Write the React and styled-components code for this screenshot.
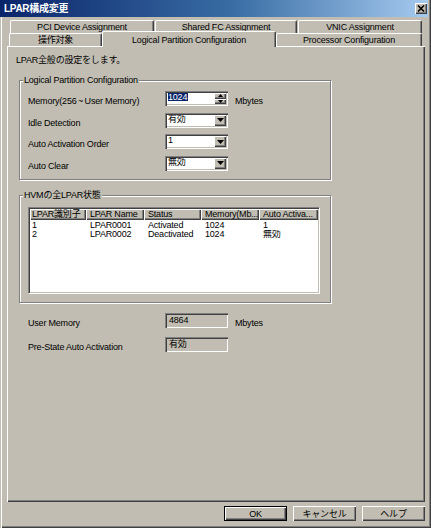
import React from 'react';
import styled, { createGlobalStyle, css } from 'styled-components';

const BG = '#c1bdb2';
const FONT = `"Liberation Sans", Arial, "Noto Sans CJK JP", sans-serif`;

const Global = createGlobalStyle`
  html, body { margin: 0; padding: 0; background: ${BG}; }
  body { font-family: ${FONT}; font-size: 9px; color: #000; }
  * { box-sizing: border-box; }
`;

const raised = css`
  box-shadow: inset 1px 1px 0 #fff, inset -1px -1px 0 #404040, inset -2px -2px 0 #808080;
`;

const sunken = css`
  box-shadow: inset 1px 1px 0 #808080, inset 2px 2px 0 #404040, inset -1px -1px 0 #fff, inset -2px -2px 0 ${BG};
`;

const Window = styled.div`
  width: 431px;
  height: 528px;
  display: flex;
  flex-direction: column;
  background: ${BG};
  box-shadow: inset -1px -1px 0 #404040, inset -2px -2px 0 #808080;
  letter-spacing: -0.2px;
`;

const TitleBar = styled.div`
  height: 17px;
  margin-right: 3px;
  display: flex;
  align-items: center;
  justify-content: space-between;
  padding: 0 1px 0 4px;
  background: linear-gradient(to right, #0a246a 0%, #3a6ea5 55%, #a6caf0 100%);
`;

const Title = styled.span`
  color: #fff;
  font-weight: bold;
  font-size: 10px;
  line-height: 12px;
  letter-spacing: -0.3px;
`;

const CloseBtn = styled.div`
  width: 12px;
  height: 11px;
  background: ${BG};
  ${raised};
  display: flex;
  align-items: center;
  justify-content: center;
`;

const Body = styled.div`
  flex: 1;
  display: flex;
  flex-direction: column;
  padding: 3px 6px 7px 6px;
  border-left: 1px solid ${BG};
  box-shadow: inset 1px 0 0 #fff;
`;

const TabStrip = styled.div`
  display: flex;
  flex-direction: column;
`;

const TabRow = styled.div`
  display: flex;
  gap: ${p => p.$gap}px;
  padding-left: ${p => p.$pl}px;
  height: 13px;
`;

const Tab = styled.div`
  width: ${p => p.$w}px;
  height: 13px;
  display: flex;
  align-items: center;
  justify-content: center;
  background: ${BG};
  border-top: 1px solid #fff;
  border-left: 1px solid #fff;
  border-right: 1px solid #404040;
  box-shadow: inset -1px 0 0 #808080;
  border-radius: 2px 2px 0 0;
  line-height: 12px;
  white-space: nowrap;
  ${p => p.$active && css`
    position: relative;
    z-index: 1;
    height: 16px;
    margin-top: -2px;
    margin-bottom: -1px;
  `}
`;

const Panel = styled.div`
  flex: 1;
  display: flex;
  flex-direction: column;
  align-items: flex-start;
  padding-left: 9px;
  box-shadow: inset 1px 1px 0 #fff, inset -1px -1px 0 #404040, inset -2px -2px 0 #808080;
`;

const Intro = styled.div`
  margin-top: 8px;
  line-height: 12px;
`;

const Group = styled.div`
  position: relative;
  width: 312px;
  margin: ${p => p.$mt}px 0 0 3px;
  padding: ${p => p.$pt}px 9px 8px 8px;
  border: 1px solid #808080;
  box-shadow: inset 1px 1px 0 #fff, 1px 1px 0 #fff;
`;

const Legend = styled.span`
  position: absolute;
  top: -7px;
  left: 3px;
  padding: 0 1px;
  background: ${BG};
  line-height: 12px;
  white-space: nowrap;
`;

const FormGrid = styled.div`
  display: grid;
  grid-template-columns: 137px 63px auto;
  grid-auto-rows: 15px;
  row-gap: ${p => p.$gap}px;
  align-items: start;
  margin-left: ${p => p.$ml || 0}px;
`;

const Label = styled.span`
  line-height: 12px;
  padding-top: 4px;
  white-space: nowrap;
`;

const Tilde = styled.span`
  display: inline-block;
  margin: 0 1.5px;
  font-family: "Liberation Sans", Arial, sans-serif;
`;

const Unit = styled(Label)`
  margin-left: 7px;
`;

const FieldBox = styled.div`
  width: 63px;
  height: 15px;
  padding: 2px;
  display: flex;
  background: ${p => (p.$readonly ? BG : '#fff')};
  ${sunken};
`;

const FieldText = styled.div`
  flex: 1;
  padding-left: 1px;
  line-height: 9px;
  white-space: nowrap;
  overflow: hidden;
`;

const Selected = styled.span`
  display: inline-block;
  background: #0a246a;
  color: #fff;
  line-height: 8px;
  padding-right: 1px;
`;

const ReadText = styled.div`
  padding-left: 2px;
  line-height: 10px;
`;

const SpinCol = styled.div`
  width: 12px;
  display: flex;
  flex-direction: column;
`;

const SpinBtn = styled.div`
  flex: 1;
  background: ${BG};
  ${raised};
  display: flex;
  align-items: center;
  justify-content: center;
`;

const ArrowBtn = styled.div`
  width: 12px;
  background: ${BG};
  ${raised};
  display: flex;
  align-items: center;
  justify-content: center;
`;

const ListView = styled.div`
  width: 292px;
  height: 87px;
  padding: 1px;
  background: #fff;
  border: 1px solid;
  border-color: #808080 #fff #fff #808080;
  box-shadow: inset 1px 1px 0 #404040, inset -1px -1px 0 ${BG};
`;

const HeaderRow = styled.div`
  display: flex;
  height: 11px;
`;

const HeaderCell = styled.div`
  width: ${p => p.$w}px;
  height: 11px;
  background: ${BG};
  ${raised};
  padding-left: ${p => (p.$first ? 2 : 4)}px;
  line-height: 11px;
  white-space: nowrap;
  overflow: hidden;
`;

const Rows = styled.div`
  padding-top: 1px;
`;

const Row = styled.div`
  display: flex;
  height: 9px;
`;

const Cell = styled.div`
  width: ${p => p.$w}px;
  padding-left: ${p => (p.$first ? 2 : 4)}px;
  line-height: 9px;
  white-space: nowrap;
  overflow: hidden;
`;

const InfoGrid = styled(FormGrid)`
  margin-top: 10px;
`;

const ButtonRow = styled.div`
  display: flex;
  justify-content: flex-end;
  gap: 6px;
  margin-top: 4px;
`;

const Button = styled.div`
  width: 63px;
  height: 15px;
  display: flex;
  align-items: center;
  justify-content: center;
  line-height: 12px;
  background: ${BG};
  ${raised};
  ${p => p.$default && css`
    box-shadow: inset 0 0 0 1px #000, inset 2px 2px 0 #fff, inset -2px -2px 0 #404040, inset -3px -3px 0 #808080;
  `}
`;

const Down = () => (
  <svg width="7" height="4" viewBox="0 0 7 4"><path d="M0 0H7L3.5 4Z" fill="#000" /></svg>
);
const SmallUp = () => (
  <svg width="5" height="3" viewBox="0 0 5 3"><path d="M0 3H5L2.5 0Z" fill="#000" /></svg>
);
const SmallDown = () => (
  <svg width="5" height="3" viewBox="0 0 5 3"><path d="M0 0H5L2.5 3Z" fill="#000" /></svg>
);

const Select = ({ value }) => (
  <FieldBox>
    <FieldText>{value}</FieldText>
    <ArrowBtn><Down /></ArrowBtn>
  </FieldBox>
);

const cols = [
  { t: 'LPAR識別子', w: 56 },
  { t: 'LPAR Name', w: 58 },
  { t: 'Status', w: 57 },
  { t: 'Memory(Mb...', w: 58 },
  { t: 'Auto Activa...', w: 59 },
];

const rows = [
  ['1', 'LPAR0001', 'Activated', '1024', '1'],
  ['2', 'LPAR0002', 'Deactivated', '1024', '無効'],
];

export default function App() {
  return (
    <>
      <Global />
      <Window>
        <TitleBar>
          <Title>LPAR構成変更</Title>
          <CloseBtn>
            <svg width="8" height="7" viewBox="0 0 8 7">
              <path d="M1 0.5L7 6.5M7 0.5L1 6.5" stroke="#000" strokeWidth="1.6" />
            </svg>
          </CloseBtn>
        </TitleBar>
        <Body>
          <TabStrip>
            <TabRow $pl={3} $gap={1}>
              <Tab $w={144}>PCI Device Assignment</Tab>
              <Tab $w={142}>Shared FC Assignment</Tab>
              <Tab $w={124}>VNIC Assignment</Tab>
            </TabRow>
            <TabRow $pl={2} $gap={0}>
              <Tab $w={93}>操作対象</Tab>
              <Tab $w={174} $active>Logical Partition Configuration</Tab>
              <Tab $w={146}>Processor Configuration</Tab>
            </TabRow>
          </TabStrip>
          <Panel>
            <Intro>LPAR全般の設定をします。</Intro>
            <Group $mt={14} $pt={10}>
              <Legend>Logical Partition Configuration</Legend>
              <FormGrid $gap={6.5}>
                <Label>Memory(256<Tilde>~</Tilde>User Memory)</Label>
                <FieldBox>
                  <FieldText><Selected>1024</Selected></FieldText>
                  <SpinCol>
                    <SpinBtn><SmallUp /></SpinBtn>
                    <SpinBtn><SmallDown /></SpinBtn>
                  </SpinCol>
                </FieldBox>
                <Unit>Mbytes</Unit>
                <Label>Idle Detection</Label>
                <Select value="有効" />
                <span />
                <Label>Auto Activation Order</Label>
                <Select value="1" />
                <span />
                <Label>Auto Clear</Label>
                <Select value="無効" />
                <span />
              </FormGrid>
            </Group>
            <Group $mt={15} $pt={11}>
              <Legend>HVMの全LPAR状態</Legend>
              <ListView>
                <HeaderRow>
                  {cols.map((c, i) => (
                    <HeaderCell key={c.t} $w={c.w} $first={i === 0}>{c.t}</HeaderCell>
                  ))}
                </HeaderRow>
                <Rows>
                  {rows.map(r => (
                    <Row key={r[0]}>
                      {r.map((v, i) => (
                        <Cell key={i} $w={cols[i].w} $first={i === 0}>{v}</Cell>
                      ))}
                    </Row>
                  ))}
                </Rows>
              </ListView>
            </Group>
            <InfoGrid $gap={9} $ml={12}>
              <Label>User Memory</Label>
              <FieldBox $readonly><ReadText>4864</ReadText></FieldBox>
              <Unit>Mbytes</Unit>
              <Label>Pre-State Auto Activation</Label>
              <FieldBox $readonly><ReadText>有効</ReadText></FieldBox>
              <span />
            </InfoGrid>
          </Panel>
          <ButtonRow>
            <Button $default>OK</Button>
            <Button>キャンセル</Button>
            <Button>ヘルプ</Button>
          </ButtonRow>
        </Body>
      </Window>
    </>
  );
}
